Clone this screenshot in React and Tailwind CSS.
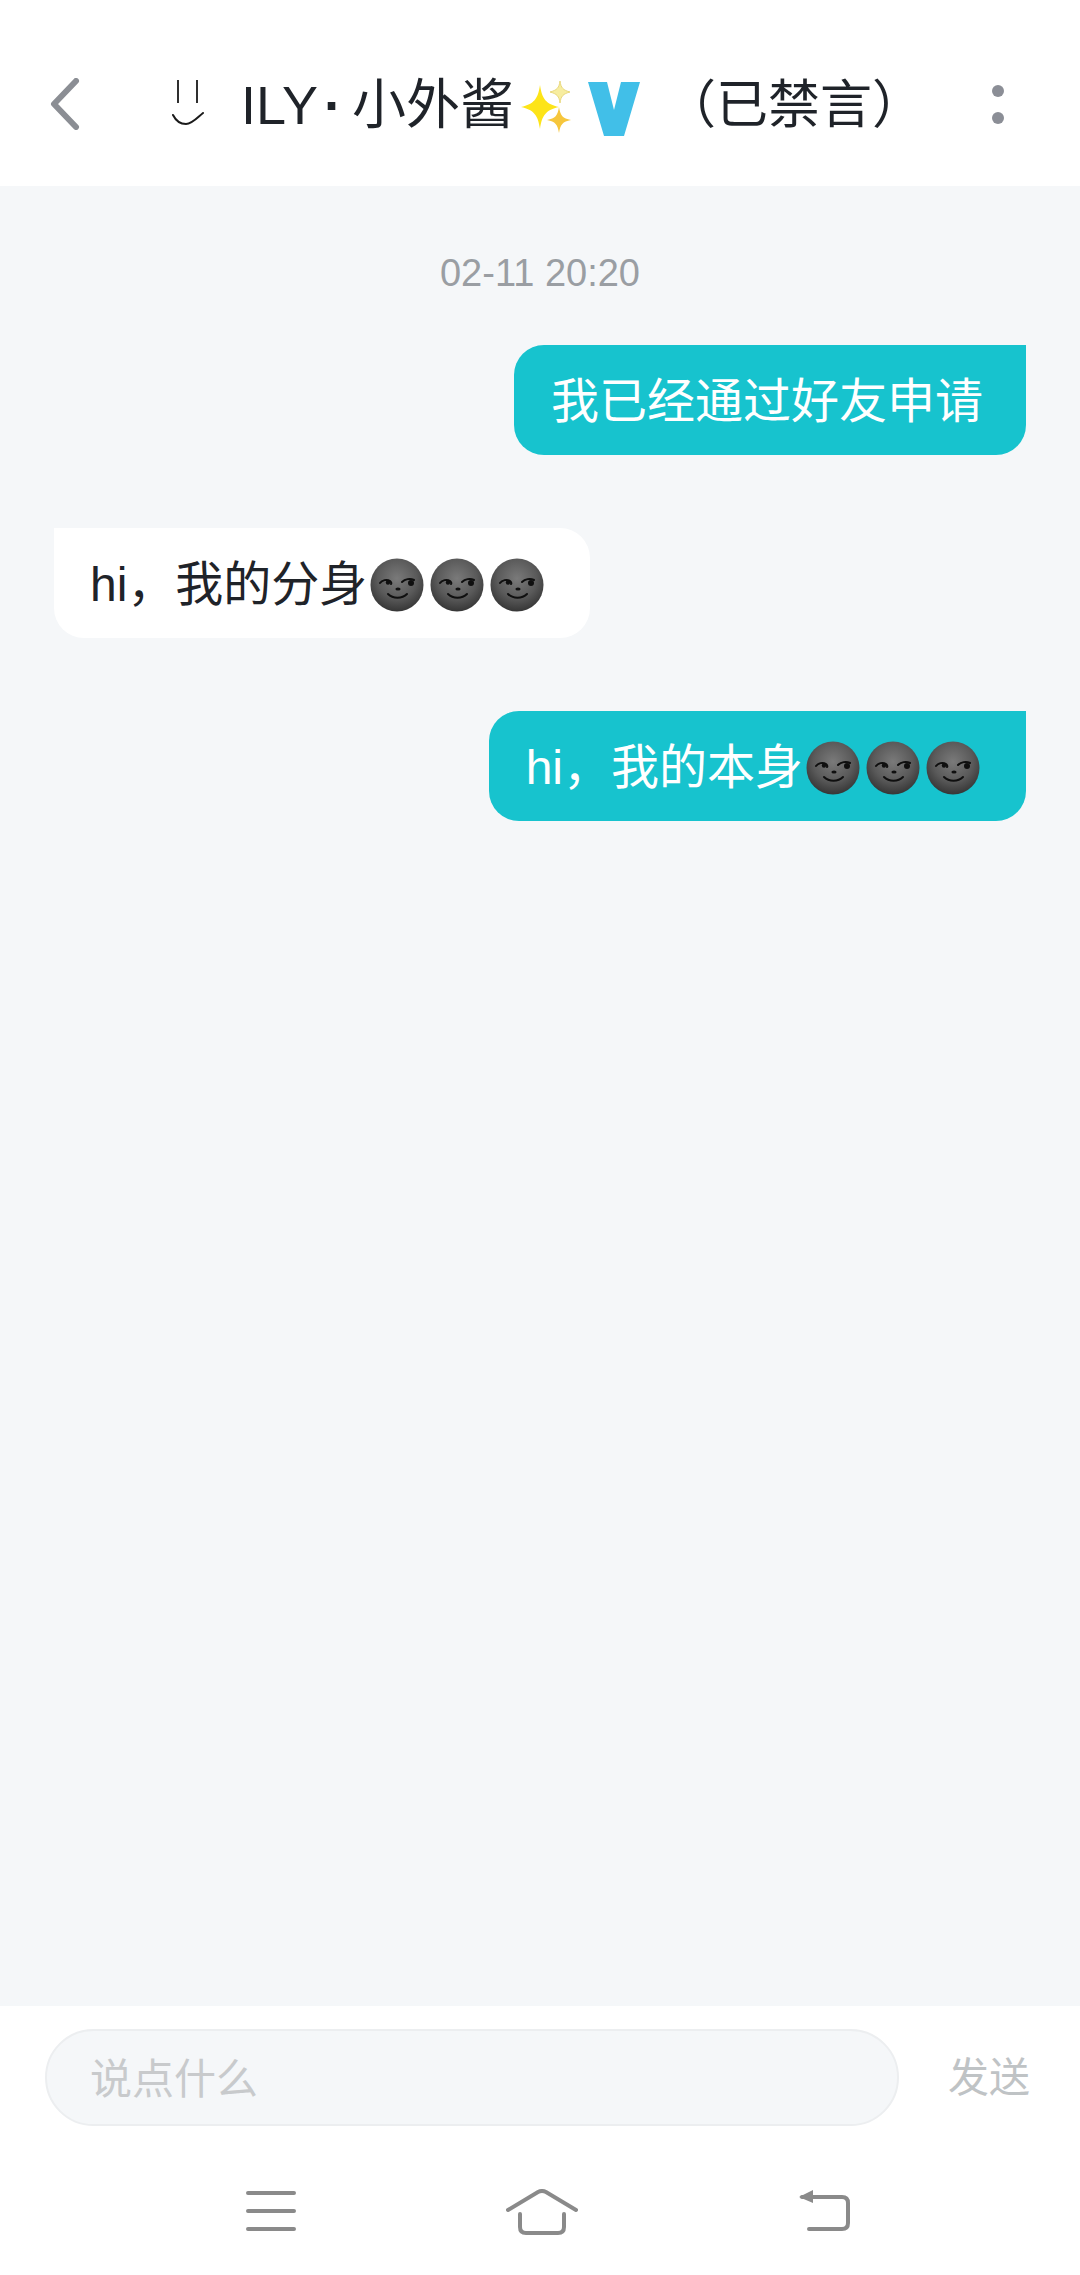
const FONT = "font-['Liberation_Sans','Noto_Sans_CJK_SC',sans-serif]"

function MoonFace({ id }) {
  return (
    <svg viewBox="0 0 54 54" className="w-[54px] h-[54px] mx-[3px] shrink-0 align-middle">
      <defs>
        <radialGradient id={id} cx="50%" cy="38%" r="62%">
          <stop offset="0%" stopColor="#7a7a7a" />
          <stop offset="60%" stopColor="#5a5a5a" />
          <stop offset="100%" stopColor="#363636" />
        </radialGradient>
      </defs>
      <circle cx="27" cy="27" r="26.5" fill={`url(#${id})`} />
      <path d="M10 25c2-3 7-4 10-2 1 1 2 2 1 3" fill="none" stroke="#0f0f0f" strokeWidth="2" strokeLinecap="round" />
      <circle cx="18" cy="24.500" r="2.200" fill="#0f0f0f" />
      <path d="M32 24c3-3 8-4 12-2" fill="none" stroke="#0f0f0f" strokeWidth="2" strokeLinecap="round" />
      <circle cx="41" cy="25" r="3" fill="#0f0f0f" />
      <ellipse cx="28" cy="31" rx="2.600" ry="1.600" fill="#0f0f0f" />
      <path d="M18 36c5 5 14 5 19 0" fill="none" stroke="#0f0f0f" strokeWidth="2" strokeLinecap="round" />
    </svg>
  )
}

function Sparkles() {
  return (
    <svg viewBox="0 0 52 58" className="w-[52px] h-[58px] shrink-0 ml-[7px] mt-[6px]">
      <path d="M19 6c2 14 6 19 19 22-13 3-17 8-19 22-2-14-6-19-19-22 13-3 17-8 19-22z" fill="#fde418" />
      <path d="M39 2c1 7 3 9 10 11-7 2-9 4-10 11-1-7-3-9-10-11 7-2 9-4 10-11z" fill="#f7eda0" stroke="#e3d06a" strokeWidth="0.8" />
      <path d="M38 28c1.500 9 3.500 11 12 13-8.500 2-10.500 4-12 13-1.500-9-3.500-11-12-13 8.500-2 10.500-4 12-13z" fill="#f6c63c" />
    </svg>
  )
}

function Bubble({ self, children }) {
  return (
    <div
      className={
        self
          ? 'self-end mr-[54px] h-[110px] flex items-center pl-[37px] pr-[43px] pt-[3px] rounded-[30px] rounded-tr-none bg-[#17c3ce] text-white text-[48px]'
          : 'self-start ml-[54px] h-[110px] flex items-center pl-[36px] pr-[43px] pt-[3px] rounded-[30px] rounded-tl-none bg-white text-[#1f2329] text-[48px]'
      }
    >
      {children}
    </div>
  )
}

export default function App() {
  return (
    <div className={`${FONT} w-[1080px] h-[2275px] flex flex-col bg-white overflow-hidden`}>
      {/* header */}
      <div className="h-[186px] shrink-0 flex items-center pl-[50px] pr-[76px] pt-[24px] text-[#1f2329] text-[54px]">
        <svg viewBox="0 0 30 52" className="w-[30px] h-[52px] shrink-0 -mt-[2px]">
          <path d="M26 3 4 26l22 23" fill="none" stroke="#8b8e94" strokeWidth="6" strokeLinecap="round" strokeLinejoin="round" />
        </svg>
        <svg viewBox="0 0 32 50" className="w-[32px] h-[50px] ml-[92px] shrink-0 -mt-[2px]">
          <path d="M6 1v23M25 1v23" fill="none" stroke="#1a1a1a" strokeWidth="1.8" />
          <path d="M1 36c3 6 8 9 13 9 6 0 11-6 17-11" fill="none" stroke="#1a1a1a" strokeWidth="2" strokeLinecap="round" />
        </svg>
        <span className="ml-[37px] whitespace-nowrap leading-none">
          ILY<span className="ml-[6px] mr-[10px] font-bold">·</span>小外酱
        </span>
        <Sparkles />
        <svg viewBox="0 0 52 56" className="w-[52px] h-[56px] ml-[15px] shrink-0 mt-[8px]">
          <path d="M0 1h19l7 28 7-28h19L36 55H16z" fill="#41bfe8" />
        </svg>
        <span className="ml-[24px] whitespace-nowrap leading-none text-[52px]">（已禁言）</span>
        <div className="ml-auto flex flex-col gap-[15px] -mt-[2px]">
          <div className="w-[12px] h-[12px] rounded-full bg-[#8b8e96]" />
          <div className="w-[12px] h-[12px] rounded-full bg-[#8b8e96]" />
        </div>
      </div>

      {/* messages */}
      <div className="flex-1 bg-[#f5f7f9] flex flex-col pt-[62px]">
        <div className="text-center text-[38px] leading-[50px] text-[#9a9ea3] mb-[47px]">02-11 20:20</div>
        <div className="flex flex-col gap-[73px]">
          <Bubble self>我已经通过好友申请</Bubble>
          <Bubble>
            hi，我的分身
            <MoonFace id="m1" />
            <MoonFace id="m2" />
            <MoonFace id="m3" />
          </Bubble>
          <Bubble self>
            hi，我的本身
            <MoonFace id="m4" />
            <MoonFace id="m5" />
            <MoonFace id="m6" />
          </Bubble>
        </div>
      </div>

      {/* input */}
      <div className="shrink-0 h-[269px] flex flex-col">
        <div className="flex items-center pt-[23px] pl-[45px]">
          <div className="w-[854px] h-[97px] rounded-full bg-[#f5f7f9] border-2 border-[#eceef0] flex items-center pl-[43px] pt-[4px] text-[42px] text-[#c8cacc]">
            说点什么
          </div>
          <span className="ml-[49px] pt-[3px] text-[41px] text-[#bfc3c5]">发送</span>
        </div>
        {/* system nav */}
        <div className="flex items-start pl-[246px] mt-[63px]">
          <svg viewBox="0 0 50 40" className="w-[50px] h-[40px] shrink-0 mt-[2px]">
            <path d="M2 2h46M2 20h46M2 38h46" stroke="#8a8a8a" strokeWidth="4" strokeLinecap="round" />
          </svg>
          <svg viewBox="0 0 72 46" className="w-[72px] h-[46px] ml-[210px] shrink-0">
            <path d="M2 21 32 3q4-2 8 0l30 18" fill="none" stroke="#8a8a8a" strokeWidth="4" strokeLinecap="round" />
            <path d="M14 25v13q0 6 6 6h32q6 0 6-6V25" fill="none" stroke="#8a8a8a" strokeWidth="4" strokeLinecap="round" />
          </svg>
          <svg viewBox="0 0 52 42" className="w-[52px] h-[42px] ml-[220px] shrink-0">
            <path d="M15 1v13L1 8z" fill="#8a8a8a" />
            <path d="M4 8h40q6 0 6 6v20q0 6-6 6H11" fill="none" stroke="#8a8a8a" strokeWidth="4" strokeLinecap="round" />
          </svg>
        </div>
      </div>
    </div>
  )
}
